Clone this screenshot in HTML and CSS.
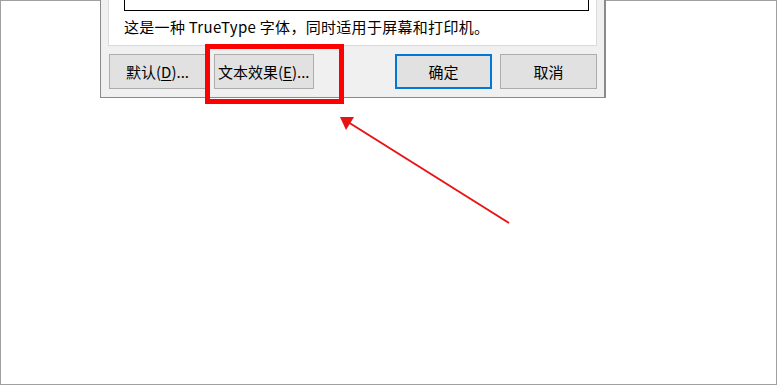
FILE: index.html
```html
<!DOCTYPE html>
<html lang="zh-CN">
<head>
    <meta charset="UTF-8">
    <title>字体 - 文本效果</title>
    <link rel="stylesheet" href="styles.css">
</head>
<body>
    <div class="frame">
        <div class="dialog">
            <div class="panel">
                <div class="preview"></div>
                <p class="hint">这是一种 TrueType 字体，同时适用于屏幕和打印机。</p>
            </div>
            <div class="buttons">
                <button class="btn">默认(<u>D</u>)...</button>
                <button class="btn">文本效果(<u>E</u>)...</button>
                <button class="btn btn-default">确定</button>
                <button class="btn">取消</button>
            </div>
        </div>

        <div class="highlight"></div>
        <svg class="arrow" width="778" height="386" viewBox="0 0 778 386">
            <line x1="509" y1="223" x2="348" y2="122" stroke="#e81414" stroke-width="2"/>
            <polygon points="340,117 354,117 346,130" fill="#e81414"/>
        </svg>
    </div>
</body>
</html>
```

FILE: styles.css
```css
* {
    margin: 0;
    padding: 0;
    box-sizing: border-box;
}
body {
    font-family: "Noto Sans CJK SC", "Noto Sans", sans-serif;
    background: #fff;
    overflow: hidden;
}
.frame {
    position: relative;
    width: 777px;
    height: 385px;
    border: 1px solid #a0a0a0;
}
.dialog {
    width: 506px;
    height: 98px;
    margin-top: -1px;
    margin-left: 99px;
    background: #f0f0f0;
    border: 1px solid #8a8a8a;
    border-top: none;
    border-right-width: 2px;
    padding: 0 7px 0 7px;
}
.panel {
    width: 489px;
    height: 46px;
    background: #fff;
    border: 1px solid #dadada;
    border-top: none;
    padding-left: 15px;
}
.preview {
    width: 465px;
    height: 11px;
    border: 1px solid #000;
    border-top: none;
}
.hint {
    font-size: 15px;
    line-height: 20px;
    letter-spacing: 0.3px;
    margin-top: 6px;
    color: #000;
}
.buttons {
    display: flex;
    gap: 8px;
    margin-top: 8px;
    padding-left: 1px;
}
.btn {
    font-family: inherit;
    font-size: 15px;
    color: #000;
    min-width: 97px;
    height: 35px;
    padding: 0 3px;
    background: #e1e1e1;
    border: 1px solid #adadad;
}
.btn u {
    text-underline-offset: 2px;
}
.btn-default {
    margin-left: auto;
    border: 2px solid #0078d7;
}
.highlight {
    position: absolute;
    left: 204px;
    top: 43px;
    width: 139px;
    height: 60px;
    border: 5px solid #f00;
}
.arrow {
    position: absolute;
    left: -1px;
    top: -1px;
}
```
